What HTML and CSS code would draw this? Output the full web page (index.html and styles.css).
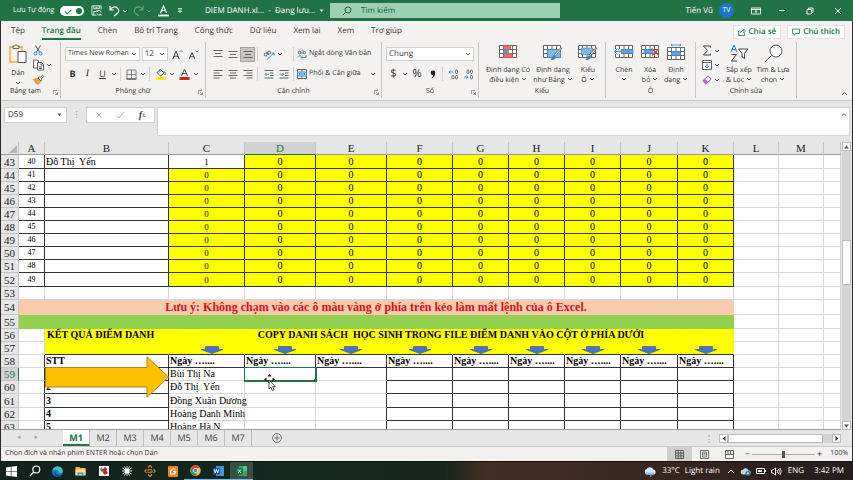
FILE: index.html
```html
<!DOCTYPE html>
<html lang="vi">
<head>
<meta charset="utf-8">
<title>DIEM DANH.xlsx</title>
<link rel="stylesheet" href="styles.css">
</head>
<body>
<svg class="defs" aria-hidden="true">
  <symbol id="chev" viewBox="0 0 6 6"><path d="M1 2l2 2 2-2" fill="none" stroke="currentColor"/></symbol>
  <symbol id="launch" viewBox="0 0 6 6"><path d="M.5 5V.5H5M2.500 2.500L5 5M5.500 2.500v3h-3" fill="none" stroke="#666" stroke-width=".8"/></symbol>
  <symbol id="down" viewBox="0 0 24 8"><path d="M5.500.5h13v3H23L12 7.500 1 3.500h4.500z" fill="#4472c4" stroke="#40608f" stroke-width=".7"/></symbol>
  <symbol id="grid" viewBox="0 0 18 15"><path d="M.5 1.500h17v12H.5zM.5 5.500h17M.5 9.500h17M4.500 1.500v12M9 1.500v12M13.500 1.500v12" fill="#fff" stroke="#555" stroke-width=".9"/></symbol>
</svg>
<div class="app">
  <header class="titlebar">
    <div class="quick">
      <label class="autosave">Lưu Tự động <input type="checkbox" class="switch" checked></label>
      <button aria-label="Lưu"><svg width="11" height="11" viewBox="0 0 12 12" fill="none" stroke="#fff" stroke-width=".9"><path d="M6 11H1.500L1 10V1h10v4M3 1v3h6V1M3 11V7h3M5 2.500h2"/><path d="M11 8a2.500 2.500 0 0 0-4.500-1M6.500 5.500V7H8M6.500 9a2.500 2.500 0 0 0 4.500 1M11 11.500V10H9.500"/></svg></button>
      <button aria-label="Hoàn tác" class="undo"><svg width="11" height="12" viewBox="0 0 11 12" fill="none" stroke="#fff" stroke-width="1.200"><path d="M1 1v4h4M1.300 4.700C3 2 6 1 8.300 3s1.700 4-.3 5.800L5 11"/></svg><svg class="chev"><use href="#chev"/></svg></button>
      <button aria-label="Làm lại" class="redo"><svg width="11" height="12" viewBox="0 0 11 12" fill="none" stroke="#fff" stroke-width="1.200"><path d="M10 1v4H6M9.700 4.700C8 2 5 1 2.700 3S1 7 3 8.800L6 11"/></svg><svg class="chev"><use href="#chev"/></svg></button>
      <button aria-label="Màu phông chữ" class="tcolor"><svg width="11" height="12" viewBox="0 0 11 12" fill="none" stroke="#fff"><path d="M2.500 8L5.500 1l3 7M3.500 5.500h4" stroke-width="1.200"/><path d="M0 10.500h11" stroke-width="1.800"/></svg></button>
      <button aria-label="Tùy chỉnh" class="more"><svg width="6" height="6" viewBox="0 0 6 6" stroke="#fff" fill="none"><path d="M1 .8h4M1.500 3L3 4.500 4.500 3z"/></svg></button>
    </div>
    <button class="doc">DIEM DANH.xl...&nbsp; -&nbsp; Đang lưu...&nbsp; <svg width="5" height="4" viewBox="0 0 5 4"><path d="M.5.5h4l-2 2.500z" fill="#fff"/></svg></button>
    <label class="search"><svg width="10" height="10" viewBox="0 0 10 10" fill="none" stroke="#20593a"><circle cx="6" cy="4" r="3"/><path d="M3.800 6.200L.7 9.300"/></svg><input type="search" placeholder="Tìm kiếm" aria-label="Tìm kiếm"></label>
    <div class="user">
      <span>Tiến Vũ</span><span class="avatar">TV</span>
      <button aria-label="Tùy chọn ruy-băng"><svg width="10" height="8" viewBox="0 0 10 8" fill="none" stroke="#fff" stroke-width=".9"><path d="M.5 1h9v6h-9zM.5 2.500h9M5 6V3.500M3.800 4.700L5 3.500l1.200 1.200"/></svg></button>
      <button aria-label="Thu nhỏ"><svg width="8" height="8" viewBox="0 0 8 8" stroke="#fff"><path d="M1 3.500h6"/></svg></button>
      <button aria-label="Khôi phục"><svg width="8" height="8" viewBox="0 0 8 8" fill="none" stroke="#fff" stroke-width=".9"><path d="M1 2.500h4.500V7H1zM2.500 2.500V1H7v4.500H5.500"/></svg></button>
      <button aria-label="Đóng"><svg width="8" height="8" viewBox="0 0 8 8" stroke="#fff"><path d="M1 1l6 6M7 1L1 7"/></svg></button>
    </div>
  </header>

  <nav class="tabs">
    <a href="#">Tệp</a><a href="#" class="on">Trang đầu</a><a href="#">Chèn</a><a href="#">Bố trí Trang</a><a href="#">Công thức</a><a href="#">Dữ liệu</a><a href="#">Xem lại</a><a href="#">Xem</a><a href="#">Trợ giúp</a>
    <div class="actions">
      <button><svg width="8" height="8" viewBox="0 0 8 8" fill="none" stroke="#217346" stroke-width=".8"><path d="M2.500 3H.5v4.500h6V5M2.500 5c.3-2 1.500-2.500 3-2.500V1l2 2-2 2V3.800"/></svg>Chia sẻ</button>
      <button><svg width="8" height="8" viewBox="0 0 8 8" fill="none" stroke="#217346" stroke-width=".8"><path d="M.5 1h7v4.500h-4l-1.500 2v-2H.5z"/></svg>Chú thích</button>
    </div>
  </nav>

  <section class="ribbon">
    <div class="group clip">
      <div class="body">
        <button class="big"><svg width="18" height="20" viewBox="0 0 18 20" fill="none"><path d="M1 3h12v15H1z" fill="#fdf3df" stroke="#e2a33c" stroke-width="1.300"/><path d="M4 4.500V2h1.500Q7 -.5 8.500 2H10v2.500z" fill="#fff" stroke="#555" stroke-width=".9"/><path d="M9 7.500h8v11H9z" fill="#fff" stroke="#555"/></svg><span>Dán</span><svg class="chev"><use href="#chev"/></svg></button>
        <div class="stack">
          <button aria-label="Cắt"><svg width="10" height="11" viewBox="0 0 10 11" fill="none" stroke="#555"><path d="M2.500.5L6.500 7M7.500.5L3.500 7"/><circle cx="2.500" cy="8.500" r="1.500" stroke="#2b88c9"/><circle cx="7.500" cy="8.500" r="1.500" stroke="#2b88c9"/></svg></button>
          <button aria-label="Sao chép"><svg width="11" height="12" viewBox="0 0 11 12" fill="#fff" stroke="#555" stroke-width=".9"><path d="M.5 1h4l1 1v7h-5z"/><path d="M4.500 3.500h4l2 2V11h-6zM8 3.500V6h2.500M6 8h3M6 9.500h3"/></svg><svg class="chev"><use href="#chev"/></svg></button>
          <button aria-label="Sao chép định dạng"><svg width="11" height="10" viewBox="0 0 11 10"><path d="M.5 4.500L5 3l3 3.500L5 9.500 3.500 8l-.5.500z" fill="#f0a23c" stroke="#c77a20" stroke-width=".6"/><path d="M5 3l3 3 1-1.200-.8-.8L10.500 1.500 9.500.5 7 2.500l-.8-.7z" fill="#fff" stroke="#555" stroke-width=".8"/></svg></button>
        </div>
      </div>
      <div class="cap">Bảng tạm<svg class="launch"><use href="#launch"/></svg></div>
    </div>

    <div class="group font">
      <div class="body rows">
        <div class="row">
          <span class="pick face"><select aria-label="Phông chữ"><option>Times New Roman</option></select><svg class="chev"><use href="#chev"/></svg></span>
          <span class="pick size"><select aria-label="Cỡ chữ"><option>12</option></select><svg class="chev"><use href="#chev"/></svg></span>
          <button class="w16" aria-label="Tăng cỡ chữ"><svg width="11" height="11" viewBox="0 0 11 11" fill="none" stroke="#444"><path d="M.8 10L4 2l3.200 8M2 7.200h4"/><path d="M7.500 3L9 1.500 10.500 3" stroke="#2b6cb0" stroke-width=".8"/></svg></button>
          <button class="w16" aria-label="Giảm cỡ chữ"><svg width="11" height="11" viewBox="0 0 11 11" fill="none" stroke="#444"><path d="M1.200 10L4 3.500 6.800 10M2.200 7.700h3.600"/><path d="M7.500 1.500L9 3l1.500-1.500" stroke="#2b6cb0" stroke-width=".8"/></svg></button>
        </div>
        <div class="row">
          <button class="w15"><b>B</b></button><button class="w15"><i>I</i></button><button class="w15"><u>U</u></button><svg class="chev wide"><use href="#chev"/></svg><hr>
          <button class="w15" aria-label="Viền"><svg width="11" height="11" viewBox="0 0 11 11" fill="none" stroke="#777" stroke-width=".9"><path d="M1 1h9v9H1zM5.500 1v9M1 5.500h9"/><path d="M.5 10h10" stroke="#333"/></svg></button><svg class="chev wide"><use href="#chev"/></svg><hr>
          <button class="w15" aria-label="Màu nền"><svg width="12" height="12" viewBox="0 0 12 12"><path d="M2 4.500L5.500 1.500l3.500 3.500L5.500 8z" fill="#fff" stroke="#555" stroke-width=".9"/><path d="M5 1v3M8.500 3.500c2 .5 2 2 1.500 3.500" fill="none" stroke="#2b6cb0"/><path d="M1 9h10v3H1z" fill="#f6ee1e"/></svg></button><svg class="chev wide"><use href="#chev"/></svg>
          <button class="w16" aria-label="Màu chữ"><svg width="11" height="12" viewBox="0 0 11 12"><path d="M2.500 8L5.500 1l3 7M3.500 5.500h4" fill="none" stroke="#555"/><path d="M.5 9h10v3H.5z" fill="#d32020"/></svg></button><svg class="chev wide"><use href="#chev"/></svg>
        </div>
      </div>
      <div class="cap">Phông chữ<svg class="launch"><use href="#launch"/></svg></div>
    </div>

    <div class="group align">
      <div class="body rows">
        <div class="row">
          <button class="w15" aria-label="Căn trên"><svg class="ln" viewBox="0 0 10 10"><path d="M.5 1.500h9M2 4.500h6M.5 7.500h9"/></svg></button><button class="w15" aria-label="Căn giữa dọc"><svg class="ln" viewBox="0 0 10 10"><path d="M.5 2.500h9M2 5.500h6M.5 8.500h9"/></svg></button><button class="w15 sel" aria-label="Căn dưới"><svg class="ln" viewBox="0 0 10 10"><path d="M.5 2.500h9M2 5.500h6M.5 8.500h9"/></svg></button><hr>
          <button class="w15" aria-label="Hướng"><svg width="12" height="11" viewBox="0 0 12 11" fill="none" stroke="#555" stroke-width=".9"><circle cx="2.800" cy="5.500" r="1.500"/><path d="M3 2.500l3 3.500"/><circle cx="6.200" cy="3.500" r="1.500"/><path d="M4 10.500L11 4M11 6.500V4H8.500" stroke="#2b88c9"/></svg></button><svg class="chev wide"><use href="#chev"/></svg><hr class="apart">
          <button class="txt"><svg width="10" height="11" viewBox="0 0 10 11" fill="none" stroke="#666" stroke-width=".8"><circle cx="2.500" cy="3.500" r="1.300"/><path d="M3.800 2v3M6 .5V5M1 8.500c0-1.500 1-2 3-1.500"/><circle cx="7.300" cy="3.700" r="1.300"/><path d="M9 6v2.500H4M6 6.500l-2 2 2 2" stroke="#2b88c9"/></svg>Ngắt dòng Văn bản</button>
        </div>
        <div class="row">
          <button class="w15" aria-label="Căn trái"><svg class="ln" viewBox="0 0 10 10"><path d="M.5 1.500h9M.5 4h6M.5 6.500h9M.5 9h6"/></svg></button><button class="w15" aria-label="Căn giữa"><svg class="ln" viewBox="0 0 10 10"><path d="M.5 1.500h9M2 4h6M.5 6.500h9M2 9h6"/></svg></button><button class="w15" aria-label="Căn phải"><svg class="ln" viewBox="0 0 10 10"><path d="M.5 1.500h9M3.500 4h6M.5 6.500h9M3.500 9h6"/></svg></button><hr>
          <button class="w15" aria-label="Giảm thụt lề"><svg class="ln" viewBox="0 0 10 10"><path d="M.5 1.500h9M6 4h3.500M6 6.500h3.500M.5 9h9"/><path d="M5 5.300H1M2.500 3.800L1 5.300l1.500 1.500" stroke="#2b88c9"/></svg></button><button class="w15" aria-label="Tăng thụt lề"><svg class="ln" viewBox="0 0 10 10"><path d="M.5 1.500h9M6 4h3.500M6 6.500h3.500M.5 9h9"/><path d="M.5 5.300h4M3 3.800l1.500 1.500L3 6.800" stroke="#2b88c9"/></svg></button><hr>
          <button class="txt"><svg width="10" height="10" viewBox="0 0 10 10" fill="#fff" stroke="#555" stroke-width=".9"><path d="M.5.5h9v9h-9zM5 .5v9"/><path d="M.5 3h9v4h-9z" fill="#bfe0f5" stroke="#2b88c9"/><path d="M2 5h6M3 4L2 5l1 1M7 4l1 1-1 1" fill="none" stroke="#2b6cb0" stroke-width=".7"/></svg>Phối &amp; Căn giữa<svg class="chev far"><use href="#chev"/></svg></button>
        </div>
      </div>
      <div class="cap">Căn chỉnh<svg class="launch"><use href="#launch"/></svg></div>
    </div>

    <div class="group number">
      <div class="body rows">
        <div class="row"><span class="pick fmt"><select aria-label="Định dạng số"><option>Chung</option></select><svg class="chev"><use href="#chev"/></svg></span></div>
        <div class="row sym">
          <button class="w15">$</button><svg class="chev wide"><use href="#chev"/></svg><button class="w16">%</button><button class="w15" aria-label="Kiểu dấu phẩy"><svg width="6" height="9" viewBox="0 0 6 9"><path d="M3 .5a2.200 2.200 0 0 1 2.200 2.500C5.200 6 3.500 8 1.200 8.500c1.200-1 1.800-2 1.800-3.300A2.300 2.300 0 0 1 3 .5z" fill="#222"/></svg></button><hr>
          <button class="w15" aria-label="Tăng thập phân"><svg width="11" height="11" viewBox="0 0 11 11" fill="none" stroke="#666" stroke-width=".9"><path d="M5 3H1M2.500 1.500L1 3l1.500 1.500" stroke="#2b88c9"/><rect x="7.500" y="1" width="2" height="3.500" rx="1"/><rect x="4" y="6.500" width="2" height="3.500" rx="1"/><rect x="7.500" y="6.500" width="2" height="3.500" rx="1"/></svg></button>
          <button class="w15" aria-label="Giảm thập phân"><svg width="11" height="11" viewBox="0 0 11 11" fill="none" stroke="#666" stroke-width=".9"><path d="M1 8h4M3.500 6.500L5 8 3.500 9.500" stroke="#2b88c9"/><rect x="4" y="1" width="2" height="3.500" rx="1"/><rect x="7.500" y="1" width="2" height="3.500" rx="1"/><rect x="7.500" y="6.500" width="2" height="3.500" rx="1"/></svg></button>
        </div>
      </div>
      <div class="cap">Số<svg class="launch"><use href="#launch"/></svg></div>
    </div>

    <div class="group styles">
      <div class="body">
        <button class="big w48"><svg width="18" height="15" viewBox="0 0 18 15"><use href="#grid" width="18" height="15"/><path d="M4.500 1.500h7v4h-7zM4.500 9.500h9v4h-9z" fill="#f0696c" stroke="#c8474a" stroke-width=".6"/><path d="M4.500 5.500h5v4h-5z" fill="#5a9bd5"/></svg><span>Định dạng Có<br>điều kiện <svg class="chev"><use href="#chev"/></svg></span></button>
        <button class="big w42"><svg width="20" height="17" viewBox="0 0 20 17"><use href="#grid" width="18" height="15"/><path d="M4.500 5.500h13v8h-13z" fill="#7db9e8" stroke="#3d85c6" stroke-width=".6"/><path d="M19 4l-6.500 8-1.500-1L17.500 4z" fill="#fff" stroke="#555" stroke-width=".7"/><path d="M11 11l2 1.500c-.5 3-3 4-6 3.500 2-1 2-4 4-5z" fill="#3d85c6"/></svg><span>Định dạng<br>như Bảng <svg class="chev"><use href="#chev"/></svg></span></button>
        <button class="big w28"><svg width="20" height="17" viewBox="0 0 20 17"><use href="#grid" width="18" height="15"/><path d="M3.500 4h11v6.500h-11z" fill="#7db9e8" stroke="#3d85c6" stroke-width=".6"/><path d="M19 4l-6.500 8-1.500-1L17.500 4z" fill="#fff" stroke="#555" stroke-width=".7"/><path d="M11 11l2 1.500c-.5 3-3 4-6 3.500 2-1 2-4 4-5z" fill="#3d85c6"/></svg><span>Kiểu<br>Ô <svg class="chev"><use href="#chev"/></svg></span></button>
      </div>
      <div class="cap">Kiểu</div>
    </div>

    <div class="group cells">
      <div class="body">
        <button class="big w26"><svg width="20" height="15" viewBox="0 0 20 15"><use href="#grid" x="1" width="18" height="15"/><path d="M7 5.500h12v4H7z" fill="#5aa5e0" stroke="#3d85c6" stroke-width=".6"/><path d="M0 5h7v5H0z" fill="#f3f2f1"/><path d="M8 7.500H.8M3.500 4.500l-3 3 3 3" fill="none" stroke="#2b88c9"/></svg><span>Chèn<br><svg class="chev"><use href="#chev"/></svg></span></button>
        <button class="big w26"><svg width="19" height="15" viewBox="0 0 19 15"><use href="#grid" width="18" height="15"/><path d="M3 5.500h9v4H3z" fill="#5aa5e0" stroke="#3d85c6" stroke-width=".6"/><path d="M11 4.500l7 7M18 4.500l-7 7" stroke="#e0444a" stroke-width="1.200"/></svg><span>Xóa<br>bỏ <svg class="chev"><use href="#chev"/></svg></span></button>
        <button class="big w26"><svg width="18" height="17" viewBox="0 0 18 17"><use href="#grid" y="2" width="18" height="15"/><path d="M4.500 7.500h9v4h-9z" fill="#5aa5e0" stroke="#3d85c6" stroke-width=".6"/><path d="M4 1h10M5.500 0L4 1l1.500 1M12.500 0L14 1l-1.500 1" fill="none" stroke="#2b88c9" stroke-width=".8"/></svg><span>Định<br>dạng <svg class="chev"><use href="#chev"/></svg></span></button>
      </div>
      <div class="cap">Ô</div>
    </div>

    <div class="group edit">
      <div class="body">
        <div class="stack">
          <button aria-label="Tổng"><svg width="10" height="11" viewBox="0 0 10 11" fill="none" stroke="#444"><path d="M8.500 2.500V1h-7l4 4.500-4 4.500h7V8.500"/></svg><svg class="chev"><use href="#chev"/></svg></button>
          <button aria-label="Điền"><svg width="10" height="10" viewBox="0 0 10 10" fill="#fff" stroke="#555" stroke-width=".9"><path d="M.5.5h9v9h-9zM.5 2.500h9"/><path d="M5 3.500V8M3 6l2 2 2-2" fill="none" stroke="#2b6cb0"/></svg><svg class="chev"><use href="#chev"/></svg></button>
          <button aria-label="Xóa"><svg width="10" height="10" viewBox="0 0 10 10"><path d="M.8 6L6 .8 9.200 4 4 9.200z" fill="#fff" stroke="#a14fb5"/><path d="M.8 6L3 3.800 6.200 7 4 9.200z" fill="#b565c7"/></svg><svg class="chev"><use href="#chev"/></svg></button>
        </div>
        <button class="big w34"><svg width="19" height="18" viewBox="0 0 19 18" fill="none"><path d="M1 8l3-7 3 7M2 5.500h4" stroke="#2b78c0"/><path d="M1.500 10.500h5l-5 6.500h5.500" stroke="#444"/><path d="M8.500 5h9.500l-3.500 4.500v5l-2.500-1.500V9.500z" fill="#fff" stroke="#444"/></svg><span>Sắp xếp<br>&amp; Lọc <svg class="chev"><use href="#chev"/></svg></span></button>
        <button class="big w34"><svg width="19" height="19" viewBox="0 0 19 19" fill="none" stroke="#555"><circle cx="12" cy="7" r="6" fill="#fff"/><path d="M7.500 11.500L.8 18"/></svg><span>Tìm &amp; Lựa<br>chọn <svg class="chev"><use href="#chev"/></svg></span></button>
      </div>
      <div class="cap">Chỉnh sửa</div>
    </div>
    <button class="fold" aria-label="Thu gọn ruy-băng"><svg width="7" height="5" viewBox="0 0 7 5"><path d="M1 4l2.500-2.500L6 4" fill="none" stroke="#444"/></svg></button>
  </section>

  <section class="formula">
    <div class="namebox"><input value="D59" aria-label="Hộp tên"><svg width="5" height="4" viewBox="0 0 5 4"><path d="M.5.5h4l-2 2.500z" fill="#555"/></svg></div>
    <span class="dots">⋮</span>
    <div class="fx"><button aria-label="Hủy"><svg width="8" height="8" viewBox="0 0 8 8" stroke="#b5b5b5"><path d="M1.500 1.500l5 5M6.500 1.500l-5 5"/></svg></button><button aria-label="Nhập"><svg width="9" height="8" viewBox="0 0 9 8" stroke="#b5b5b5" fill="none"><path d="M1 4.500L3 7l5-6"/></svg></button><button aria-label="Chèn hàm"><i>f</i><sub>x</sub></button></div>
    <div class="entry"><textarea aria-label="Thanh công thức"></textarea><svg width="6" height="5" viewBox="0 0 7 5"><path d="M1 4l2.500-2.500L6 4" fill="none" stroke="#444"/></svg></div>
  </section>

  <main class="sheet">
    <div class="view">
      <table>
        <colgroup><col class="ch"><col class="ca"><col class="cb"><col class="cc"><col class="cd"><col class="cd"><col class="cf"><col class="cg"><col class="cg"><col class="cg"><col class="cj"><col class="cg"><col class="cl"><col class="cl"><col></colgroup>
        <thead><tr><th class="corner"><svg width="8" height="8" viewBox="0 0 8 8"><path d="M8 0v8H0z" fill="#b5b5b5"/></svg></th><th>A</th><th>B</th><th>C</th><th class="cur">D</th><th>E</th><th>F</th><th>G</th><th>H</th><th>I</th><th>J</th><th>K</th><th>L</th><th>M</th><th></th></tr></thead>
        <tbody class="roll">
          <tr class="tall"><th>43</th><td>40</td><td class="name">Đỗ Thị&nbsp; Yến</td><td class="plain">1</td><td>0</td><td>0</td><td>0</td><td>0</td><td>0</td><td>0</td><td>0</td><td>0</td><td></td><td></td><td></td></tr>
          <tr><th>44</th><td>41</td><td></td><td>0</td><td>0</td><td>0</td><td>0</td><td>0</td><td>0</td><td>0</td><td>0</td><td>0</td><td></td><td></td><td></td></tr>
          <tr><th>45</th><td>42</td><td></td><td>0</td><td>0</td><td>0</td><td>0</td><td>0</td><td>0</td><td>0</td><td>0</td><td>0</td><td></td><td></td><td></td></tr>
          <tr><th>46</th><td>43</td><td></td><td>0</td><td>0</td><td>0</td><td>0</td><td>0</td><td>0</td><td>0</td><td>0</td><td>0</td><td></td><td></td><td></td></tr>
          <tr><th>47</th><td>44</td><td></td><td>0</td><td>0</td><td>0</td><td>0</td><td>0</td><td>0</td><td>0</td><td>0</td><td>0</td><td></td><td></td><td></td></tr>
          <tr><th>48</th><td>45</td><td></td><td>0</td><td>0</td><td>0</td><td>0</td><td>0</td><td>0</td><td>0</td><td>0</td><td>0</td><td></td><td></td><td></td></tr>
          <tr><th>49</th><td>46</td><td></td><td>0</td><td>0</td><td>0</td><td>0</td><td>0</td><td>0</td><td>0</td><td>0</td><td>0</td><td></td><td></td><td></td></tr>
          <tr><th>50</th><td>47</td><td></td><td>0</td><td>0</td><td>0</td><td>0</td><td>0</td><td>0</td><td>0</td><td>0</td><td>0</td><td></td><td></td><td></td></tr>
          <tr><th>51</th><td>48</td><td></td><td>0</td><td>0</td><td>0</td><td>0</td><td>0</td><td>0</td><td>0</td><td>0</td><td>0</td><td></td><td></td><td></td></tr>
          <tr class="tall"><th>52</th><td>49</td><td></td><td>0</td><td>0</td><td>0</td><td>0</td><td>0</td><td>0</td><td>0</td><td>0</td><td>0</td><td></td><td></td><td></td></tr>
        </tbody>
        <tbody>
          <tr><th>53</th><td></td><td></td><td></td><td></td><td></td><td></td><td></td><td></td><td></td><td></td><td></td><td></td><td></td><td></td></tr>
          <tr class="note"><th>54</th><td colspan="11">Lưu ý: Không chạm vào các ô màu vàng ở phía trên kẻo làm mất lệnh của ô Excel.</td><td></td><td></td><td></td></tr>
          <tr class="band"><th>55</th><td colspan="11"></td><td></td><td></td><td></td></tr>
          <tr class="head"><th>56</th><td></td><td class="y left">KẾT QUẢ ĐIỂM DANH</td><td class="y" colspan="9">COPY DANH SÁCH&nbsp; HỌC SINH TRONG FILE ĐIỂM DANH VÀO CỘT Ở PHÍA DƯỚI</td><td></td><td></td><td></td></tr>
          <tr class="arrows"><th>57</th><td></td><td class="y"></td><td class="y shift"><svg><use href="#down"/></svg></td><td class="y shift"><svg><use href="#down"/></svg></td><td class="y"><svg><use href="#down"/></svg></td><td class="y"><svg><use href="#down"/></svg></td><td class="y"><svg><use href="#down"/></svg></td><td class="y"><svg><use href="#down"/></svg></td><td class="y"><svg><use href="#down"/></svg></td><td class="y"><svg><use href="#down"/></svg></td><td class="y"><svg><use href="#down"/></svg></td><td></td><td></td><td></td></tr>
        </tbody>
        <tbody class="result">
          <tr class="days"><th>58</th><td></td><td>STT</td><td>Ngày …....</td><td>Ngày …....</td><td>Ngày …....</td><td>Ngày …....</td><td>Ngày …....</td><td>Ngày …....</td><td>Ngày …....</td><td>Ngày …....</td><td>Ngày …....</td><td></td><td></td><td></td></tr>
          <tr><th class="cur">59</th><td></td><td class="host"><svg class="pointer" viewBox="0 0 124 42" preserveAspectRatio="none"><path d="M.5 11.500h101.500V.8L123.500 21 102 41.200V31H.5z" fill="#ffc000" stroke="#a8862b"/></svg></td><td>Bùi Thị Na</td><td class="active"><svg class="cursor" width="14" height="18" viewBox="0 0 14 18"><path d="M5.500 0l2 2.500h-4zM5.500 10L4 8h3zM0 5.500L2.500 3.500v4zM11 5.500L8.500 3.500v4z" fill="#111"/><path d="M5 6v9l2-1.800 1.300 3.300 1.700-.7-1.300-3.200h2.600z" fill="#fff" stroke="#222" stroke-width=".8"/></svg></td><td></td><td></td><td></td><td></td><td></td><td></td><td></td><td></td><td></td><td></td></tr>
          <tr><th>60</th><td></td><td>2</td><td>Đỗ Thị&nbsp; Yến</td><td></td><td></td><td></td><td></td><td></td><td></td><td></td><td></td><td></td><td></td><td></td></tr>
          <tr class="tall"><th>61</th><td></td><td>3</td><td>Đồng Xuân Dương</td><td></td><td></td><td></td><td></td><td></td><td></td><td></td><td></td><td></td><td></td><td></td></tr>
          <tr><th>62</th><td></td><td>4</td><td>Hoàng Danh Minh</td><td></td><td></td><td></td><td></td><td></td><td></td><td></td><td></td><td></td><td></td><td></td></tr>
          <tr><th>63</th><td></td><td>5</td><td>Hoàng Hà N</td><td></td><td></td><td></td><td></td><td></td><td></td><td></td><td></td><td></td><td></td><td></td></tr>
        </tbody>
      </table>
    </div>
    <div class="vbar">
      <button aria-label="Cuộn lên"><svg width="5" height="4" viewBox="0 0 5 4"><path d="M2.500.5L5 3.500H0z" fill="#555"/></svg></button>
      <div class="track"><div class="thumb"></div></div>
      <button aria-label="Cuộn xuống"><svg width="5" height="4" viewBox="0 0 5 4"><path d="M2.500 3.500L5 .5H0z" fill="#555"/></svg></button>
    </div>
  </main>

  <nav class="sheets">
    <div class="navs"><span>◂</span><span>▸</span></div>
    <a href="#" class="on">M1</a><a href="#">M2</a><a href="#">M3</a><a href="#">M4</a><a href="#">M5</a><a href="#">M6</a><a href="#">M7</a>
    <button class="add" aria-label="Trang tính mới"><svg width="10" height="10" viewBox="0 0 10 10" fill="none" stroke="#666" stroke-width=".9"><circle cx="5" cy="5" r="4.400"/><path d="M5 2.500v5M2.500 5h5"/></svg></button>
    <div class="hbar"><span class="dots">⋮</span><button aria-label="Cuộn trái"><svg width="4" height="5" viewBox="0 0 4 5"><path d="M.5 2.500L3.500 0v5z" fill="#333"/></svg></button><div class="hthumb"></div><div class="hrest"></div><button aria-label="Cuộn phải"><svg width="4" height="5" viewBox="0 0 4 5"><path d="M3.500 2.500L.5 0v5z" fill="#333"/></svg></button></div>
  </nav>

  <footer class="status">
    <span class="msg">Chọn đích và nhấn phím ENTER hoặc chọn Dán</span>
    <button class="on" aria-label="Thường"><svg width="9" height="9" viewBox="0 0 9 9" fill="none" stroke="#555" stroke-width=".9"><path d="M.5.5h8v8h-8zM.5 3.200h8M.5 5.900h8M3.200.5v8M5.900.5v8"/></svg></button>
    <button aria-label="Bố trí trang"><svg width="9" height="9" viewBox="0 0 9 9" fill="none" stroke="#666" stroke-width=".9"><path d="M.5.5h8v8h-8zM2.500 2h4v5h-4zM3.500 3.500h2M3.500 5h2"/></svg></button>
    <button aria-label="Ngắt trang"><svg width="9" height="9" viewBox="0 0 9 9" fill="none" stroke="#555" stroke-width=".9"><path d="M.5.5h8v8h-8zM3 .5v4M5.500.5v4H.5M5.500 4.500h3"/></svg></button>
    <div class="zoom"><span>−</span><input type="range" min="0" max="100" value="50" aria-label="Thu phóng"><span>+</span></div>
    <span class="pc">100%</span>
  </footer>

  <div class="taskbar">
    <button aria-label="Start"><svg width="11" height="11" viewBox="0 0 11 11"><path d="M0 1.500L4.800.8v4.400H0zM5.400.7L11 0v5.200H5.400zM0 5.800h4.800v4.400L0 9.500zM5.400 5.800H11V11l-5.600-.7z" fill="#fff"/></svg></button>
    <button aria-label="Tìm"><svg width="12" height="12" viewBox="0 0 12 12" fill="none" stroke="#fff" stroke-width="1.200"><circle cx="7.300" cy="4.500" r="3.500"/><path d="M4.800 7L1 11"/></svg></button>
    <button aria-label="Edge"><svg width="11" height="11" viewBox="0 0 11 11"><circle cx="5.500" cy="5.500" r="5.300" fill="#1583cf"/><path d="M.3 5C1-.5 10-1.500 10.800 5c0 2.500-3.800 2.500-4.300 1C7 3.500 3 2.500.3 5z" fill="#3cc8b0"/><path d="M4 4.500C3 8 6 9.500 9.500 8.500 6 12.500 1 10 2.500 6z" fill="#0c4f9c"/></svg></button>
    <button aria-label="File Explorer"><svg width="11" height="10" viewBox="0 0 11 10"><path d="M.5 1h4l1 1h5v7H.5z" fill="#e9b64a"/><path d="M.5 3.500h10v6H.5z" fill="#fbe08a"/><path d="M2.500 9.500v-3h6v3H7V8H4v1.500z" fill="#3d8fd1"/></svg></button>
    <button aria-label="Trò chơi"><svg width="10" height="10" viewBox="0 0 10 10"><path d="M0 0h10v10H0z" fill="#fff"/><path d="M1 3l2-2 1 3-2 2z" fill="#3b9a4a"/><path d="M3 4l3-3 1 3 2 3-3 2-2-2z" fill="#d32028"/><path d="M6 1l2 2-1 2z" fill="#222"/></svg></button>
    <button aria-label="Bộ gõ"><svg width="12" height="12" viewBox="0 0 12 12" stroke="#fff"><circle cx="6" cy="6" r="2" fill="#fff"/><path d="M6 1v10M1.500 3l9 6M10.500 3l-9 6M1 6h10M3.500 1.500l5 9M8.500 1.500l-5 9" stroke-width=".8"/></svg></button>
    <button aria-label="G"><svg width="12" height="12" viewBox="0 0 12 12" fill="none" stroke="#d98a2b" stroke-width="1.100"><path d="M4 2.500l2-2 2 2M4 9.500l2 2 2-2M2.500 4L.8 6l1.700 2M9.500 4l1.700 2-1.700 2"/><path d="M8 4.500H4v3h4V6H6" stroke="#bb6d1d"/></svg></button>
    <button aria-label="Foxit"><svg width="10" height="11" viewBox="0 0 10 11"><rect width="10" height="11" rx="1" fill="#f08421"/><path d="M7.500 3H4.500L2.500 5v3h3.500l1.500-1.500V5.500H5" fill="none" stroke="#fff" stroke-width="1.200"/></svg></button>
    <button class="run" aria-label="Chrome"><svg width="11" height="11" viewBox="0 0 11 11"><circle cx="5.500" cy="5.500" r="5.200" fill="#f1c232"/><path d="M1 2.800A5.200 5.200 0 0 1 10.200 3H5.500L3.200 6.500z" fill="#df4436"/><path d="M1 2.800A5.200 5.200 0 0 0 5 10.700l2.300-4H3.200z" fill="#2f9e55"/><circle cx="5.500" cy="5.500" r="2.400" fill="#fff"/><circle cx="5.500" cy="5.500" r="1.800" fill="#4285f4"/></svg></button>
    <button class="run" aria-label="Word"><svg width="11" height="10" viewBox="0 0 11 10"><path d="M3 0h8v10H3z" fill="#4a90d9"/><path d="M0 2h7v6.500H0z" fill="#1b56b0"/><path d="M1.300 3.500l1 3.500 1.200-3.500L4.700 7l1-3.500" fill="none" stroke="#fff" stroke-width=".9"/></svg></button>
    <button class="run on" aria-label="Excel"><svg width="11" height="10" viewBox="0 0 11 10"><path d="M3 0h8v10H3z" fill="#33a867"/><path d="M7 0h4v5H7z" fill="#4cc98a"/><path d="M0 2h7v6.500H0z" fill="#107c41"/><path d="M2 3.500L5 7M5 3.500L2 7" stroke="#fff" stroke-width=".9"/></svg></button>
    <div class="tray">
      <svg width="14" height="11" viewBox="0 0 14 11"><path d="M3.500 8.500a3 3 0 0 1 0-5.500 4 4 0 0 1 7 .5 2.600 2.600 0 0 1 .5 5z" fill="#d7ebfa"/><path d="M3 6.500h8v2H3z" fill="#8fc3ee"/><path d="M7 8.500h1.500V11H7z" fill="#3da0e8"/></svg>
      <span class="temp">33°C</span><span class="rain">Light rain</span>
      <svg width="8" height="6" viewBox="0 0 8 6"><path d="M1 5l3-3 3 3" fill="none" stroke="#fff"/></svg>
      <svg width="11" height="9" viewBox="0 0 11 9"><path d="M3 7.500a2.400 2.400 0 0 1 0-4.800 3 3 0 0 1 5.500.8 2 2 0 0 1 .5 4z" fill="#c9d3da"/><circle cx="8" cy="6.200" r="2.500" fill="#2d7dbd"/><path d="M7 6.200h2M8 5.200v2" stroke="#fff" stroke-width=".7"/></svg>
      <svg width="10" height="8" viewBox="0 0 10 8"><path d="M.5 1.500h8v5h-8z" fill="none" stroke="#fff"/><path d="M2 3h4v2H2zM9 3h1v2H9z" fill="#fff"/></svg>
      <svg width="11" height="9" viewBox="0 0 11 9" fill="none" stroke="#fff" stroke-width=".9"><path d="M.5 3h1.500l2.500-2v7L2 6H.5zM6 3q1 1.500 0 3M7.500 2q1.700 2.500 0 5M9 1q2.500 3.500 0 7"/></svg>
      <span class="lang">ENG</span><span class="clock">3:42 PM</span>
    </div>
  </div>
</div>
</body>
</html>
```
FILE: styles.css
```css
* { box-sizing: border-box; }
html, body { height: 100%; }
body {
  margin: 0;
  background: #2b2b2b;
  font: 8px/10px "Open Sans", "Noto Sans", sans-serif;
  text-rendering: geometricPrecision;
  color: #333;
}
button, input, select, textarea {
  font: inherit;
  text-rendering: inherit;
  color: inherit;
  border: 0;
  padding: 0;
  margin: 0;
  background: none;
  border-radius: 0;
  outline: 0;
}
a { color: inherit; text-decoration: none; }
svg { flex: none; }
.defs { position: absolute; width: 0; height: 0; }
.chev { width: 6px; height: 6px; color: #555; }

.app {
  display: grid;
  grid-template-rows: 21px 21px 59px 41px minmax(0, 1fr) 17px 14px 19px;
  height: 100vh;
  padding: 0 1px;
  overflow: hidden;
}

/* title bar */
.titlebar {
  display: grid;
  grid-template-columns: 204px 125px 230px 1fr;
  align-items: center;
  margin: 0 -1px;
  padding-left: 1px;
  background: #217346;
  color: #fff;
}
.titlebar .chev { color: #fff; }
.quick { display: flex; align-items: center; padding-left: 12px; }
.quick button { display: flex; align-items: center; gap: 2px; flex: none; }
.autosave { display: flex; align-items: center; width: 78px; flex: none; white-space: nowrap; font-size: 7px; }
.switch {
  appearance: none;
  position: relative;
  width: 24px;
  height: 10px;
  margin-left: auto;
  margin-right: 7px;
  flex: none;
  border-radius: 5px;
  background: #fff;
}
.switch::before {
  content: "";
  position: absolute;
  left: 5px;
  top: 3px;
  width: 5px;
  height: 3px;
  border: solid #217346;
  border-width: 0 0 1px 1px;
  transform: rotate(-45deg);
}
.switch::after {
  content: "";
  position: absolute;
  right: 2px;
  top: 2px;
  width: 6px;
  height: 6px;
  border-radius: 50%;
  background: #217346;
}
.undo { margin-left: 7px; }
.redo { margin-left: 5px; opacity: .3; }
.tcolor { margin-left: 6px; }
.more { margin-left: 8px; }
.doc { text-align: left; white-space: nowrap; }
.search {
  display: flex;
  align-items: center;
  gap: 9px;
  height: 15px;
  padding-left: 12px;
  background: #9fd0b4;
  color: #20593a;
}
.search input { flex: 1; min-width: 0; appearance: none; }
.search input::placeholder { color: #20593a; opacity: 1; }
.user { display: flex; align-items: center; justify-content: flex-end; padding-right: 10px; }
.avatar {
  width: 15px;
  height: 15px;
  margin: 0 10px 0 6px;
  border-radius: 50%;
  background: #1a75d1;
  font-size: 7px;
  line-height: 15px;
  text-align: center;
}
.user button { display: grid; place-items: center; width: 28px; height: 16px; }
.user button:last-child { width: 10px; margin-left: 9px; }
.user button:first-of-type { width: 24px; }

/* ribbon tabs */
.tabs {
  display: flex;
  align-items: center;
  gap: 17px;
  padding: 0 7px 0 10px;
  background: #f3f2f1;
}
.tabs a { height: 17px; padding-top: 3px; white-space: nowrap; }
.tabs .on { border-bottom: 2px solid #217346; color: #217346; font-weight: 600; }
.actions { display: flex; gap: 6px; margin-left: auto; }
.actions button {
  display: flex;
  align-items: center;
  gap: 3px;
  height: 14px;
  padding: 0 4px;
  background: #fff;
  border: 1px solid #e6e4e2;
  color: #217346;
  font-weight: 600;
}

/* ribbon groups */
.ribbon {
  display: flex;
  padding-bottom: 2px;
  background: #f3f2f1;
  border-bottom: 1px solid #c8c6c4;
}
.group { display: flex; flex-direction: column; border-right: 1px solid #c8c6c4; flex: none; }
.clip { width: 60px; }
.font { width: 145px; }
.align { width: 176px; }
.number { width: 97px; }
.styles { width: 127px; }
.cells { width: 90px; }
.edit { width: 101px; }
.body { flex: 1; display: flex; padding: 2px 4px 0; }
.rows { flex-direction: column; gap: 4px; padding-top: 4px; }
.row { display: flex; align-items: center; height: 16px; }
.row button { display: flex; align-items: center; justify-content: center; height: 15px; flex: none; }
.row hr { width: 1px; height: 14px; margin: 0 3px 0 2px; border: 0; background: #d4d2d0; flex: none; }
.row .apart { margin-left: 9px; }
.w15 { width: 15px; }
.w16 { width: 16px; }
.wide { width: 8px; height: 6px; flex: none; }
.sel { background: #c8c6c4; outline: 1px solid #a5a3a1; outline-offset: -1px; }
.ln { width: 10px; height: 10px; fill: none; stroke: #555; stroke-width: .9; }
.row b, .row u { font-size: 9px; }
.row i { font-family: "Liberation Serif", serif; font-size: 10px; }
.sym { font-size: 11px; }
.cap { position: relative; height: 11px; line-height: 9px; text-align: center; }
.clip .cap { padding-right: 10px; }
.launch { position: absolute; right: 2px; top: 3px; width: 5px; height: 5px; }
.pick { position: relative; height: 14px; background: #fff; border: 1px solid #d2d0ce; }
.pick select { appearance: none; width: 100%; height: 100%; padding-left: 2px; line-height: 12px; display: block; }
.pick .chev { position: absolute; right: 2px; top: 3px; pointer-events: none; }
.face { width: 77px; margin-right: 2px; }
.size { width: 27px; margin-right: 1px; }
.fmt { width: 88px; }
.txt { gap: 2px; white-space: nowrap; }
.txt, .cap, .big, .face { font-size: 7px; }
.txt .far { margin-left: 7px; }

.big { display: flex; flex-direction: column; align-items: center; height: 42px; flex: none; white-space: nowrap; }
.big > svg:first-child { margin-bottom: auto; }
.big span { line-height: 10px; min-height: 20px; }
.clip .big { width: 32px; padding-left: 2px; }
.clip .big span { min-height: 10px; }
.clip .big > .chev { margin-top: 1px; }
.styles .body, .cells .body { padding-left: 5px; }
.w48 { width: 48px; }
.w42 { width: 42px; }
.w28 { width: 28px; }
.w26 { width: 26px; }
.w34 { width: 34px; }
.stack { display: flex; flex-direction: column; justify-content: space-between; height: 42px; }
.stack button { display: flex; align-items: center; gap: 2px; height: 13px; }
.clip .body { padding-left: 0; padding-right: 0; }
.edit .stack { padding-left: 2px; width: 22px; }
.edit .body { padding-right: 0; }
.fold { margin: auto 4px 1px auto; height: 6px; display: flex; }

/* formula bar */
.formula { display: flex; align-items: flex-start; padding: 6px 2px 0 3px; background: #e6e6e6; }
.namebox { display: flex; align-items: center; width: 63px; height: 16px; padding: 0 4px 0 3px; background: #fff; border: 1px solid #d0d0d0; }
.namebox input { flex: 1; min-width: 0; }
.dots { width: 19px; text-align: center; line-height: 15px; color: #888; }
.fx { display: flex; width: 69px; height: 16px; padding: 0 1px; background: #fff; border: 1px solid #d0d0d0; }
.fx button { display: flex; flex: 1; align-items: center; justify-content: center; color: #444; font: 10px "Liberation Serif", serif; }
.fx sub { font-size: 7px; vertical-align: baseline; }
.fx i { font-weight: bold; }
.entry { display: flex; flex: 1; height: 29px; margin-left: 2px; padding: 4px 2px; background: #fff; border: 1px solid #d0d0d0; }
.entry textarea { flex: 1; height: 100%; resize: none; }

/* grid */
.sheet { display: flex; background: #e6e6e6; min-height: 0; }
.view { flex: 1; min-width: 0; overflow: hidden; background: #fff; border-bottom: 1px solid #9d9d9d; }
table {
  width: 100%;
  table-layout: fixed;
  border-collapse: separate;
  border-spacing: 0;
  font: 10px/12px "Liberation Serif", serif;
  text-rendering: auto;
  color: #000;
}
.ch { width: 18px; }
.ca { width: 26px; }
.cb { width: 124px; }
.cc { width: 76px; }
.cd { width: 71px; }
.cf { width: 66px; }
.cg { width: 56px; }
.cj { width: 57px; }
.cl { width: 45px; }
th, td { padding: 0; height: 13px; border: solid #d6d6d6; border-width: 0 1px 1px 0; white-space: nowrap; }
th { background: #e6e6e6; border-color: #c3c3c3; font-weight: normal; font-size: 11px; color: #222; }
thead th { height: 13px; border-bottom-color: #9d9d9d; }
.corner { text-align: right; line-height: 0; padding: 2px 1px 0 0; }
.cur { background: #d2d2d2; color: #217346; }
thead .cur { border-bottom: 1px solid #217346; }
tbody .cur { border-right-color: #217346; }
.tall > * { height: 14px; }

.roll td { border-color: #333; background: #ff0; text-align: center; }
.roll td:nth-child(2), .roll td:nth-child(3), .roll .plain { background: #fff; }
.roll td:nth-child(2) { font-size: 8px; }
.roll .name { text-align: left; padding-left: 1px; }
.roll td:nth-child(4) { font-size: 9px; }
.roll td:nth-child(n+13) { background: #fff; border-color: #d6d6d6; }

.note > * { height: 15px; }
.note td:nth-child(2) { background: #f8cbad; border-color: #f8cbad; color: #d8101a; font-weight: bold; font-size: 12px; text-align: center; }
.band > * { height: 14px; }
.band td:nth-child(2) { background: #92d050; border-color: #92d050; }
td.y { background: #ff0; border-color: #ff0; text-align: center; font-weight: bold; }
td.left { text-align: left; padding-left: 2px; }
.arrows td { line-height: 0; vertical-align: bottom; }
.arrows td.y { border-bottom-color: #333; }
.arrows td svg { width: 24px; height: 8px; }
.arrows td.shift { padding-left: 10px; }

.result td { padding-left: 1px; }
.result td:nth-child(2) { border-right-color: #333; }
.result td:nth-child(3) { border-color: #333; font-weight: bold; }
.result td:nth-child(n+7):nth-child(-n+12) { border-color: #333; }
.result td:nth-child(6) { border-right-color: #333; }
.days td:nth-child(n+3):nth-child(-n+12) { border-color: #333; font-weight: bold; }
.host, .active { position: relative; }
.pointer { position: absolute; left: 0; top: -12px; width: 124px; height: 42px; z-index: 1; }
.result td.active { box-shadow: 0 0 0 1px #217346; border-color: #217346; }
.active::after {
  content: "";
  position: absolute;
  right: -2px;
  bottom: -2px;
  width: 3px;
  height: 3px;
  background: #217346;
}
.cursor { position: absolute; left: 19px; top: 6px; z-index: 1; }

.vbar { display: flex; flex-direction: column; width: 10px; margin-left: 1px; }
.vbar button, .hbar button { display: grid; place-items: center; width: 9px; height: 9px; background: #fff; border: 1px solid #bbb; flex: none; }
.track { flex: 1; background: #d4d4d4; display: grid; grid-template-rows: 33% 45px 1fr; width: 9px; }
.thumb { grid-row: 2; background: #fff; border: 1px solid #bbb; }

/* sheet tabs */
.sheets { display: flex; background: #e6e6e6; border-bottom: 1px solid #c8c8c8; font-size: 9px; color: #444; }
.navs { display: flex; gap: 14px; width: 62px; padding: 3px 0 0 16px; color: #a8a8a8; font-size: 7px; }
.sheets a { width: 27px; line-height: 16px; text-align: center; border-right: 1px solid #bdbdbd; }
.sheets .on { background: #fff; color: #217346; font-weight: bold; border-bottom: 2px solid #217346; }
.add { display: flex; align-items: center; margin-left: 20px; }
.hbar { display: flex; align-items: center; margin-left: auto; padding-right: 11px; }
.hbar .dots { width: 20px; }
.hthumb { width: 95px; height: 9px; background: #fff; border: 1px solid #bbb; }
.hrest { width: 9px; height: 9px; background: #d4d4d4; }

/* status bar */
.status { display: flex; align-items: center; padding: 0 4px; background: #f3f2f1; font-size: 7px; }
.msg { flex: 1; }
.status button { display: grid; place-items: center; width: 25px; height: 100%; }
.status .on { background: #d0cecc; }
.zoom { display: flex; align-items: center; gap: 2px; margin-left: 3px; font-size: 9px; }
.zoom input { appearance: none; width: 63px; height: 10px; background: linear-gradient(#aaa, #aaa) center / 100% 1px no-repeat; }
.zoom input::-webkit-slider-thumb { appearance: none; width: 3px; height: 7px; background: #555; }
.pc { margin-left: 8px; }

/* taskbar */
.taskbar {
  display: flex;
  margin: 0 -1px;
  background: linear-gradient(90deg, #14211d, #13291d 35%, #15261c 52%, #452d22 57%, #38251e 78%, #241d1c);
  border-top: 1px solid #111;
  color: #fff;
}
.taskbar button { display: grid; place-items: center; width: 23px; flex: none; }
.taskbar .run { border-bottom: 1px solid #76b9ed; }
.taskbar .on { background: #3a4c44; }
.tray { display: flex; align-items: center; margin-left: auto; padding-right: 9px; white-space: nowrap; }
.temp { margin: 0 5px; }
.rain { margin-right: 7px; }
.tray svg + svg { margin-left: 5px; }
.lang { margin: 0 10px 0 6px; }
.clock { padding-right: 0; }
```
